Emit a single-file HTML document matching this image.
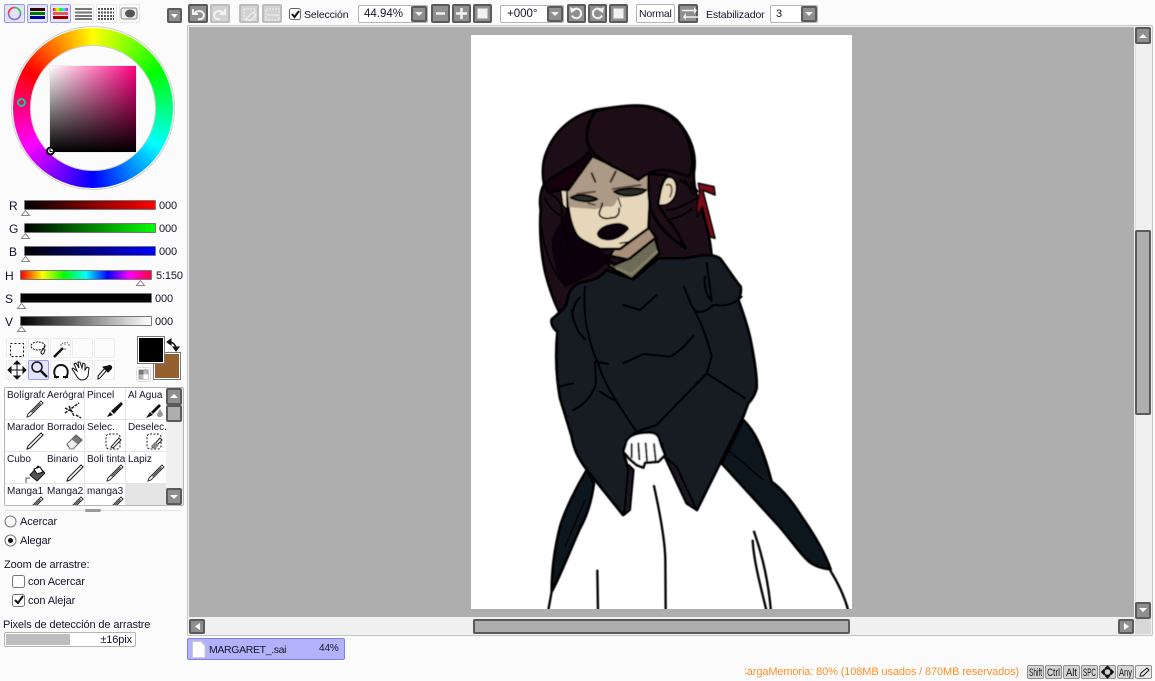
<!DOCTYPE html>
<html><head><meta charset="utf-8"><title>SAI</title>
<style>
html,body{margin:0;padding:0;width:1155px;height:681px;overflow:hidden;background:#fbfbfb}
body{position:relative;font:11px "Liberation Sans",sans-serif;color:#14142a}
.a,.t,.b,.bl,.c,.sl,.tb,.k{position:absolute}
.t{white-space:nowrap;line-height:15px;letter-spacing:-.12px}
.b{box-sizing:border-box;width:19px;height:19px;background:#8f8f8f;border:2px solid #5a5a5a;border-radius:2px}
.bl{box-sizing:border-box;width:20px;height:19px;background:#d2d2d2;border:2px solid #bdbdbd;border-radius:2px}
.c{box-sizing:border-box;height:18px;background:#fff;border:1px solid #b4b4b4;border-radius:2px;padding-left:9px;line-height:16px;font-size:11px}
.sl{box-sizing:border-box;width:132px;height:10px;border:1px solid #777;border-radius:1px}
.tb{box-sizing:border-box;width:21px;height:20px;background:#fbfbfb;border:1px solid #ededed;border-radius:2px}
.k{box-sizing:border-box;top:665px;width:17px;height:14px;background:#d4d4d4;border:1px solid #8f8f8f;border-radius:2px}
.k svg{position:absolute;left:0;top:0}
.k text{font:11px "Liberation Sans",sans-serif;fill:#111}
.cell{position:absolute;width:40px;height:31px;background:#fff;overflow:hidden}
.cell span{position:absolute;left:2px;top:2px;font-size:10px;line-height:12px;white-space:nowrap}
.cell svg{position:absolute;left:0;top:0}
</style></head><body>

<svg width="0" height="0" style="position:absolute"><defs>
<g id="pen"><path d="M23 26L36 13l2 2L25 28l-3 1z" fill="#fff" stroke="#333" stroke-width="1"/><path d="M26 24l9-9 1 1-9 9z" fill="#555"/></g>
<g id="pen2"><path d="M23 26L36 13l2 2L25 28l-3 1z" fill="#fff" stroke="#222" stroke-width="1.100"/></g>
<g id="brush"><path d="M22 29l3-5 3 3z" fill="#111"/><path d="M26 23l10-9 2 2-9 10z" fill="#111"/></g>
<g id="sel"><rect x="21" y="14" width="14" height="15" rx="3" fill="none" stroke="#222" stroke-dasharray="2 1.500"/><path d="M26 27l8-9 2 2-8 8z" fill="#fff" stroke="#222"/></g>
</defs></svg>

<!-- top-left mode buttons -->
<div class="a" style="left:4px;top:4px;width:21px;height:19px;box-sizing:border-box;background:#e2e4fb;border:1px solid #9a9af5;border-radius:2px"></div>
<div class="a" style="left:27px;top:4px;width:21px;height:19px;box-sizing:border-box;background:#e2e4fb;border:1px solid #9a9af5;border-radius:2px"></div>
<div class="a" style="left:50px;top:4px;width:21px;height:19px;box-sizing:border-box;background:#e2e4fb;border:1px solid #9a9af5;border-radius:2px"></div>
<div class="a" style="left:73px;top:4px;width:21px;height:19px;box-sizing:border-box;border:1px solid #e8e8e8;border-radius:2px"></div>
<div class="a" style="left:96px;top:4px;width:21px;height:19px;box-sizing:border-box;border:1px solid #e8e8e8;border-radius:2px"></div>
<div class="a" style="left:119px;top:4px;width:21px;height:19px;box-sizing:border-box;border:1px solid #e8e8e8;border-radius:2px"></div>
<svg class="a" style="left:0;top:0" width="145" height="26">
<circle cx="14.500" cy="13.500" r="6" fill="none" stroke="#8a6fd0" stroke-width="1.600"/>
<path d="M14.500 7.500a6 6 0 0 1 6 6" fill="none" stroke="#3ecf3e" stroke-width="1.600"/><path d="M8.500 13.500a6 6 0 0 1 6-6" fill="none" stroke="#ff3b2e" stroke-width="1.600"/>
<rect x="30" y="8" width="15" height="3" fill="#300"/><rect x="30" y="12" width="15" height="3" fill="#070"/><rect x="30" y="16" width="15" height="3" fill="#009"/>
<linearGradient id="hg"><stop offset="0" stop-color="#f00"/><stop offset=".3" stop-color="#ff0"/><stop offset=".5" stop-color="#0f0"/><stop offset=".7" stop-color="#0ff"/><stop offset="1" stop-color="#f0f"/></linearGradient>
<rect x="53" y="8" width="15" height="3" fill="url(#hg)"/><rect x="53" y="12" width="15" height="3" fill="#e55"/><rect x="53" y="16" width="15" height="3" fill="#900"/>
<path d="M75 9h17M75 12.500h17M75 16h17M75 19h17" stroke="#777" stroke-width="2"/>
<path d="M98 9h16M98 12.500h16M98 16h16M98 19h16" stroke="#555" stroke-width="2" stroke-dasharray="2 1"/>
<rect x="121" y="8" width="16" height="11" rx="2" fill="#eee" stroke="#888"/><ellipse cx="130" cy="13.500" rx="5" ry="4" fill="#555"/>
</svg>
<div class="b" style="left:167px;top:8px;width:15px;height:15px"></div>
<svg class="a" style="left:167px;top:8px" width="15" height="15"><path d="M4 6h7l-3.500 4z" fill="#fff"/></svg>

<!-- colour wheel -->
<div class="a" style="left:11px;top:26px;width:164px;height:164px;border-radius:50%;box-sizing:border-box;border:1px solid #cfcfcf;background:#fbfbfb"></div>
<div class="a" style="left:13px;top:28px;width:160px;height:160px;border-radius:50%;background:conic-gradient(#ff0,#0f0,#0ff,#00f,#f0f,#f00,#ff0)"></div>
<div class="a" style="left:30px;top:45px;width:126px;height:126px;box-sizing:border-box;border-radius:50%;background:#fbfbfb;border:1px solid #cfcfcf"></div>
<div class="a" style="left:49px;top:65px;width:88px;height:88px;box-sizing:border-box;border:1px solid #eee;background:linear-gradient(to top,#000,rgba(0,0,0,0)),linear-gradient(to right,#fff,#ff0080)"></div>
<svg class="a" style="left:0;top:0" width="185" height="190">
<circle cx="21.500" cy="102.500" r="3.500" fill="none" stroke="#17c79a" stroke-width="2"/>
<circle cx="50.500" cy="151" r="3.500" fill="#fff" stroke="#000" stroke-width="2"/><path d="M50 149v2.500h2.500" stroke="#000" fill="none"/>
</svg>

<!-- sliders -->
<div class="t" style="left:9px;top:199px;font-size:12px">R</div>
<div class="t" style="left:9px;top:222px;font-size:12px">G</div>
<div class="t" style="left:9px;top:245px;font-size:12px">B</div>
<div class="t" style="left:5px;top:269px;font-size:12px">H</div>
<div class="t" style="left:5px;top:292px;font-size:12px">S</div>
<div class="t" style="left:5px;top:315px;font-size:12px">V</div>
<div class="sl" style="left:24px;top:200px;background:linear-gradient(to right,#000,#f00)"></div>
<div class="sl" style="left:24px;top:223px;background:linear-gradient(to right,#000,#0f0)"></div>
<div class="sl" style="left:24px;top:246px;background:linear-gradient(to right,#000,#00f)"></div>
<div class="sl" style="left:20px;top:270px;background:linear-gradient(to right,#f00,#ff0,#0f0,#0ff,#00f,#f0f,#f04)"></div>
<div class="sl" style="left:20px;top:293px;background:#000"></div>
<div class="sl" style="left:20px;top:316px;background:linear-gradient(to right,#000,#fff)"></div>
<svg class="a" style="left:0;top:205px" width="160" height="130" fill="#fff" stroke="#888">
<path d="M25.500 5.500l4 5h-8zM25.500 28.500l4 5h-8zM25.500 51.500l4 5h-8zM140.500 75.500l4 5h-8zM21.500 98.500l4 5h-8zM21.500 121.500l4 5h-8z"/>
</svg>
<div class="t" style="left:159px;top:199px">000</div>
<div class="t" style="left:159px;top:222px">000</div>
<div class="t" style="left:159px;top:245px">000</div>
<div class="t" style="left:156px;top:269px">5:150</div>
<div class="t" style="left:155px;top:292px">000</div>
<div class="t" style="left:155px;top:315px">000</div>

<!-- tools -->
<div class="tb" style="left:6px;top:338px"></div><div class="tb" style="left:28px;top:338px"></div><div class="tb" style="left:50px;top:338px"></div><div class="tb" style="left:72px;top:338px"></div><div class="tb" style="left:94px;top:338px"></div>
<div class="tb" style="left:6px;top:360px"></div><div class="tb" style="left:28px;top:360px;background:#e2e4fb;border-color:#9a9af5"></div><div class="tb" style="left:50px;top:360px"></div><div class="tb" style="left:72px;top:360px"></div><div class="tb" style="left:94px;top:360px"></div>
<svg class="a" style="left:0;top:336px" width="185" height="48" fill="none" stroke="#111">
<rect x="10.500" y="7.500" width="13" height="13" stroke-dasharray="2 2"/>
<ellipse cx="38" cy="10" rx="7" ry="4" stroke-dasharray="2 1"/><path d="M44 10c2 4-6 5-2 8 1 1 3-2 3-5"/>
<path d="M54 21l9-9" stroke-width="2.500"/><path d="M65 6v3M65 12v2M60 9h2M68 9h2M62 7l1 1M68 6l-1 1" stroke="#777"/>
<path d="M17 25v18M8 34h18M17 25l-3 3h6zM17 43l-3-3h6zM8 34l3-3v6zM26 34l-3-3v6z" fill="#111"/>
<circle cx="37" cy="31" r="5" stroke-width="1.500"/><path d="M41 35l6 6" stroke-width="2.500"/>
<path d="M57 42c-5-4-3-13 4-13s9 9 4 13M54 41h5M63 41h5" stroke-width="2"/>
<path d="M82 44c-3 0-5-3-6-5l-4-6 1-1 4 3-3-7 2-1 3 5-1-6 2 0 2 6 1-5 2 1 0 6 2-3 2 1-1 8c-1 2-3 4-6 4z" fill="#fff" stroke-width="1"/>
<path d="M98 43l2-1 7-8-2-2-7 8z" fill="#fff"/><path d="M103 31l5 5 3-3c2-2-1-5-3-3z" fill="#111"/>
</svg>
<div class="a" style="left:137px;top:336px;width:28px;height:28px;box-sizing:border-box;border:1px solid #777;background:#000;box-shadow:inset 0 0 0 1px #fff;z-index:2"></div>
<div class="a" style="left:153px;top:352px;width:28px;height:28px;box-sizing:border-box;border:1px solid #777;background:#956030;box-shadow:inset 0 0 0 1px #fff"></div>
<svg class="a" style="left:135px;top:336px;z-index:3" width="46" height="46" fill="none" stroke="#111"><path d="M34 6c4 0 7 3 7 7" stroke-width="1.500"/><path d="M36 3l-4 3 4 3zM38 11l3 4 3-4z" fill="#111"/>
<rect x="1.500" y="31.500" width="14" height="14" rx="2" stroke="#ddd" fill="#fbfbfb"/><rect x="4" y="34" width="9" height="9" fill="#bbb" stroke="#999"/><rect x="4" y="34" width="4.500" height="4.500" fill="#777" stroke="none"/><rect x="8.500" y="38.500" width="4.500" height="4.500" fill="#fff" stroke="none"/></svg>

<!-- brush list -->
<div class="a" style="left:4px;top:387px;width:180px;height:119px;box-sizing:border-box;border:1px solid #b5b5b5;background:#eee;border-radius:2px"></div>
<div class="a" style="left:5px;top:388px;width:161px;height:117px;background:#e4e4e4;overflow:hidden">
<div class="cell" style="left:0;top:0"><span>Bolígrafo</span><svg width="40" height="31"><use href="#pen"/></svg></div>
<div class="cell" style="left:40px;top:0;width:39px"><span>Aerógrafo</span><svg width="40" height="31"><path d="M20 25l14-10M24 18l5 10M20 20l8 4M31 27l5 3" stroke="#222" stroke-width="1.500" stroke-dasharray="3 1" fill="none"/></svg></div>
<div class="cell" style="left:80px;top:0"><span>Pincel</span><svg width="40" height="31"><use href="#brush"/></svg></div>
<div class="cell" style="left:121px;top:0"><span>Al Agua</span><svg width="40" height="31"><path d="M20 30l4-6 3 3z" fill="#111"/><path d="M25 24l8-8 2 2-8 8z" fill="#111"/><path d="M34 21l-3 5c-1 4 6 4 6 0z" fill="#999"/></svg></div>
<div class="cell" style="left:0;top:32px"><span>Marador</span><svg width="40" height="31"><use href="#pen2"/></svg></div>
<div class="cell" style="left:40px;top:32px;width:39px"><span>Borrador</span><svg width="40" height="31"><path d="M23 23l8-8 6 5-8 8h-4l-3-3z" fill="#777" stroke="#555"/><path d="M22 24l5-5 6 5-5 5h-3z" fill="#eee" stroke="#777"/></svg></div>
<div class="cell" style="left:80px;top:32px"><span>Selec.</span><svg width="40" height="31"><use href="#sel"/></svg></div>
<div class="cell" style="left:121px;top:32px"><span>Deselec.</span><svg width="40" height="31"><use href="#sel"/><path d="M25 26l4-4 4 3-4 4z" fill="#888"/></svg></div>
<div class="cell" style="left:0;top:64px"><span>Cubo</span><svg width="40" height="31"><path d="M25 23l8-9 7 7-8 8z" fill="#555" stroke="#111"/><path d="M21 31v-5h4" fill="none" stroke="#555"/><path d="M29 17l6-2 3 5-6 2z" fill="#fff" stroke="#111"/></svg></div>
<div class="cell" style="left:40px;top:64px;width:39px"><span>Binario</span><svg width="40" height="31"><use href="#pen2"/></svg></div>
<div class="cell" style="left:80px;top:64px"><span>Boli tinta</span><svg width="40" height="31"><use href="#pen"/></svg></div>
<div class="cell" style="left:121px;top:64px"><span>Lapiz</span><svg width="40" height="31"><use href="#pen"/></svg></div>
<div class="cell" style="left:0;top:96px"><span>Manga1</span><svg width="40" height="31"><use href="#pen"/></svg></div>
<div class="cell" style="left:40px;top:96px;width:39px"><span>Manga2</span><svg width="40" height="31"><use href="#pen"/></svg></div>
<div class="cell" style="left:80px;top:96px"><span>manga3</span><svg width="40" height="31"><use href="#pen"/></svg></div>
</div>
<div class="a" style="left:166px;top:388px;width:16px;height:117px;background:#f0f0f0"></div>
<div class="b" style="left:166px;top:388px;width:16px;height:17px"></div>
<div class="a" style="left:166px;top:405px;width:16px;height:17px;box-sizing:border-box;background:#aeaeae;border:2px solid #5a5a5a;border-radius:2px"></div>
<div class="b" style="left:166px;top:488px;width:16px;height:17px"></div>
<svg class="a" style="left:166px;top:388px" width="16" height="117"><path d="M4 10l4-4 4 4z" fill="#fff"/><path d="M4 107l4 4 4-4z" fill="#fff"/></svg>
<div class="a" style="left:5px;top:510px;width:176px;height:1px;background:#e2e2e2"></div>
<div class="a" style="left:85px;top:509px;width:16px;height:3px;background:#9a9a9a;border-radius:2px"></div>

<!-- zoom options -->
<svg class="a" style="left:0;top:512px" width="185" height="100">
<circle cx="10.500" cy="9.500" r="5.500" fill="#fff" stroke="#777"/>
<circle cx="10.500" cy="28.500" r="5.500" fill="#fff" stroke="#777"/><circle cx="10.500" cy="28.500" r="2.500" fill="#111"/>
<rect x="12.500" y="63.500" width="12" height="12" rx="2" fill="#fff" stroke="#777"/>
<rect x="12.500" y="82.500" width="12" height="12" rx="2" fill="#fff" stroke="#777"/><path d="M15 88l3 3 5-7" fill="none" stroke="#111" stroke-width="2"/>
</svg>
<div class="t" style="left:20px;top:515px">Acercar</div>
<div class="t" style="left:20px;top:534px">Alegar</div>
<div class="t" style="left:4px;top:558px">Zoom de arrastre:</div>
<div class="t" style="left:28px;top:575px">con Acercar</div>
<div class="t" style="left:28px;top:594px">con Alejar</div>
<div class="t" style="left:3px;top:618px">Pixels de detección de arrastre</div>
<div class="a" style="left:4px;top:632px;width:132px;height:15px;box-sizing:border-box;border:1px solid #b4b4b4;background:#fff;border-radius:2px"><div class="a" style="left:1px;top:1px;width:64px;height:11px;background:#bdbdbd"></div><div class="t" style="right:3px;top:0">±16pix</div></div>

<!-- top toolbar -->
<div class="b" style="left:188px;top:4px;width:20px"></div>
<div class="bl" style="left:210px;top:4px"></div>
<div class="bl" style="left:239px;top:4px"></div>
<div class="bl" style="left:262px;top:4px"></div>
<svg class="a" style="left:186px;top:2px" width="100" height="24" fill="none" stroke="#f2f2f2" stroke-width="2">
<path d="M7 7v5h5M8 12c2-4 9-4 10 1 0 3-3 5-6 4"/><path d="M39 7v5h-5M38 12c-2-4-9-4-10 1 0 3 3 5 6 4"/>
<rect x="58" y="7" width="11" height="11" stroke-width="1" stroke-dasharray="2 1"/><path d="M60 17l7-7 3 3-6 6z" stroke-width="1"/>
<rect x="80" y="7" width="13" height="11" stroke-width="1" stroke-dasharray="2 1"/><path d="M81 13h11" stroke-width="1"/>
</svg>
<svg class="a" style="left:288px;top:7px" width="15" height="15"><rect x="1.500" y="1.500" width="11" height="11" rx="2" fill="#fff" stroke="#666"/><path d="M4 7l2.500 3L11 4" fill="none" stroke="#111" stroke-width="2"/></svg>
<div class="t" style="left:304px;top:8px;font-size:10.500px">Selección</div>
<div class="c" style="left:358px;top:5px;width:70px;font-size:11.500px;padding-left:5px">44.94%</div>
<div class="b" style="left:411px;top:6px;width:16px;height:16px"></div>
<div class="b" style="left:431px;top:4px"></div><div class="b" style="left:452px;top:4px"></div><div class="b" style="left:473px;top:4px"></div>
<div class="c" style="left:500px;top:5px;width:64px;font-size:11.500px;padding-left:6px">+000°</div>
<div class="b" style="left:547px;top:6px;width:16px;height:16px"></div>
<div class="b" style="left:567px;top:4px"></div><div class="b" style="left:588px;top:4px"></div><div class="b" style="left:609px;top:4px"></div>
<div class="c" style="left:636px;top:4px;width:39px;height:19px;padding-left:2px;font-size:10.500px;line-height:18px;letter-spacing:-.2px">Normal</div>
<div class="b" style="left:678px;top:4px;width:20px"></div>
<div class="t" style="left:706px;top:8px;font-size:10.500px">Estabilizador</div>
<div class="c" style="left:770px;top:5px;width:48px;padding-left:5px">3</div>
<div class="b" style="left:801px;top:6px;width:16px;height:16px"></div>
<svg class="a" style="left:0;top:0" width="825" height="26" fill="none" stroke="#f2f2f2" stroke-width="2.500">
<path d="M415 12h8l-4 4z M551 12h8l-4 4z M805 12h8l-4 4z" fill="#f2f2f2" stroke="none"/>
<path d="M436 13.500h9M456 13.500h11M461.500 8v11"/><rect x="477.500" y="8.500" width="10" height="10" fill="#f2f2f2" stroke="none"/>
<path d="M572.500 10.500a4.800 4.800 0 1 1-.5 5" stroke-width="2"/><path d="M570 7l1 6 5-3z" fill="#f2f2f2" stroke="none"/>
<path d="M601.500 10.500a4.800 4.800 0 1 0 .5 5" stroke-width="2"/><path d="M604 7l-1 6-5-3z" fill="#f2f2f2" stroke="none"/>
<rect x="613.500" y="8.500" width="10" height="10" fill="#f2f2f2" stroke="none"/>
<path d="M682 10.500h12M686 17h12" stroke-width="1.500"/><path d="M694 7l3 3.500-3 3.500zM686 13l-3 4 3 3z" fill="#f2f2f2" stroke="none"/>
</svg>

<!-- canvas frame -->
<div class="a" style="left:187px;top:25px;width:966px;height:611px;box-sizing:border-box;border:1px solid #c4c4c4;border-radius:2px;background:#f0f0f0"></div>
<div class="a" style="left:189px;top:27px;width:945px;height:590px;background:#aeaeae"></div>
<div class="a" style="left:471px;top:35px;width:381px;height:574px;background:#fff"></div>

<!-- drawing -->
<svg class="a" style="left:0;top:0" width="1155" height="681" stroke-linejoin="round" stroke-linecap="round">
<defs><clipPath id="cv"><rect x="471" y="35" width="381" height="574"/></clipPath>
<filter id="sf"><feGaussianBlur stdDeviation=".45"/></filter></defs>
<g clip-path="url(#cv)" filter="url(#sf)">

<!-- head & hair, zoom-7 coordinates -->
<g transform="translate(520 95) scale(.33333)" stroke="#000" stroke-width="8">
<path d="M225 45C160 60 105 105 80 170C65 205 68 245 72 268C60 290 58 320 62 345C58 400 62 470 75 530C85 570 100 620 125 665L300 520L560 490L575 480C570 430 560 380 530 300C525 280 520 260 522 230C530 180 515 125 470 75C430 40 380 28 330 32C290 35 255 40 225 45Z" fill="#1c0d19"/>
<path d="M140 345L240 462L275 490L230 530L135 578C110 540 95 480 95 430Z" fill="#0c0208" stroke="none"/>
<path d="M72 265C110 225 170 215 205 175L215 185L145 285L125 285L85 292Z" fill="#150409" stroke="none"/>
<!-- ribbon -->
<path d="M535 265L582 275L585 300L548 285L585 430L570 425L547 335L532 365L530 330L540 290Z" fill="#7a0c18" stroke-width="5"/>
<!-- neck -->
<path d="M290 450L385 395L410 432L330 495L270 482Z" fill="#a98e79"/>
<!-- face -->
<path d="M215 185L300 225L355 255L385 235L390 300L385 400L330 440L300 462L240 462C205 445 180 435 170 420C155 395 145 365 140 285Z" fill="#e6d6ba"/>
<path d="M143 290L215 187L300 227L355 257L385 237L388 285C360 300 330 310 300 308C285 315 290 335 270 335C250 330 240 345 215 342L147 336Z" fill="#ad9a86" stroke="none"/>
<path d="M122 285L140 282L142 345L128 330Z" fill="#e6d6ba" stroke-width="5"/>
<!-- brows / eye marks -->
<path d="M215 235L226 260M287 230L272 260" fill="none" stroke="#2a1e1e" stroke-width="6"/>
<path d="M170 297L225 290M278 282L362 270" fill="none" stroke="#5a483c" stroke-width="6"/>
<path d="M152 308C170 296 205 298 232 312C215 322 180 322 152 308Z" fill="#2c2e28" stroke-width="6"/>
<path d="M282 290C310 278 350 278 378 285C360 305 310 308 282 290Z" fill="#2c2e28" stroke-width="6"/>
<path d="M295 310L303 335M205 325L225 330" fill="none" stroke="#2a2520" stroke-width="4"/>
<!-- nose -->
<path d="M247 325C245 340 236 348 238 358C242 372 262 372 275 368C290 370 300 355 297 340" fill="none" stroke-width="5"/>
<!-- lips -->
<path d="M232 415C240 395 265 387 295 385C315 388 325 395 325 402C310 420 290 435 262 435C245 433 232 428 232 415Z" fill="#0c0408" stroke-width="3"/>
<path d="M300 445L330 440" fill="none" stroke-width="4"/>
<!-- fringe lines over face -->
<path d="M225 50C205 80 200 110 200 135C205 165 235 195 300 225L355 255C375 240 385 232 420 225C450 225 480 235 505 245C525 220 520 150 480 90C440 45 390 32 330 32C280 36 245 42 225 50Z" fill="#1c0d19"/>
<path d="M72 268C110 230 170 215 205 172L216 186L145 285L122 284L85 292Z" fill="#170610"/>
<!-- right hair panel -->
<path d="M386 236C385 280 385 320 395 350C410 385 440 420 470 440L497 460C480 430 470 400 440 370C425 345 415 335 415 325L425 270L440 240Z" fill="#1c0d19"/>
<!-- ear -->
<path d="M415 330C420 300 422 270 440 248C462 240 475 265 468 295C462 320 440 335 415 330Z" fill="#e6d6ba" stroke-width="6"/>
<path d="M440 270C455 262 460 285 450 305" fill="none" stroke="#75604f" stroke-width="6"/>
<!-- bun lines -->
<path d="M440 345C470 345 505 325 530 310M440 375C470 370 495 360 515 342M480 255L525 285M495 255L520 300M510 262L535 290" fill="none" stroke-width="5"/>
<!-- left locks -->
<path d="M75 310C85 335 105 355 125 362M90 295C125 315 128 340 125 365C130 420 150 470 170 510M65 400C75 470 95 530 135 570" fill="none" stroke-width="5"/>
<!-- collar -->
<path d="M255 490L282 510L330 490L405 430L418 475L335 553L270 515Z" fill="#6d6a54"/>
<path d="M290 520L335 538L410 470" fill="none" stroke="#85826a" stroke-width="7"/>
</g>

<!-- back skirt panels, zoom-9 coordinates -->
<g transform="translate(530 420) scale(.33333)" stroke="#000" stroke-width="8">
<path d="M170 150L192 190C185 240 170 290 150 325C125 380 90 470 65 515C65 450 75 380 90 320C105 270 140 200 170 150Z" fill="#10181f"/>
<path d="M640 0C670 30 695 70 725 185C760 210 790 250 815 290C850 340 885 400 902 448C880 445 850 440 830 418C800 390 770 340 730 300L575 130Z" fill="#10181f"/>
<path d="M105 380L165 240M600 95L700 180" fill="none" stroke-width="4"/>
</g>

<!-- dress, zoom-8 coordinates -->
<g transform="translate(530 240) scale(.33333)" stroke="#000" stroke-width="8">
<path d="M310 118L385 55L465 55L490 50C530 42 560 45 572 57C600 95 615 120 632 140C635 155 630 170 625 178C640 220 655 265 662 300C672 350 682 405 680 445C675 465 665 480 655 490L640 530L501 810L470 790L405 651L395 610L320 575L295 600L282 640L295 690L300 750L290 815L279 825L171 690C140 650 130 620 125 590L90 475C80 420 75 350 82 275C68 265 62 250 65 238C80 225 105 205 110 190C115 160 120 145 145 130C170 122 200 125 230 90Z" fill="#121a22"/>
<g fill="none" stroke-width="6">
<path d="M280 195L330 210L380 165"/>
<path d="M280 370L340 342L420 350C450 335 470 310 490 288"/>
<path d="M200 365L235 372"/>
<path d="M125 210C125 225 130 240 145 275L165 298M150 172C135 185 125 210 130 235M165 140C160 180 165 250 175 280C180 310 190 340 205 370C215 410 240 460 320 575"/>
<path d="M85 440L130 430M130 510C160 495 185 470 198 432L195 365M210 455L250 480"/>
<path d="M462 140C470 160 480 190 490 205C500 220 520 222 550 195C570 195 600 205 635 170"/>
<path d="M530 70L545 180M525 110C520 135 530 170 545 182"/>
<path d="M490 205C510 240 530 290 545 350L530 400"/>
<path d="M530 400L645 475M530 400L380 555L320 575"/>
</g>
</g>

<!-- sleeve tips and hand, zoom-9 coordinates -->
<g transform="translate(530 420) scale(.33333)" stroke="#000" stroke-width="6">
<path d="M296 135L282 285L300 270L311 150Z" fill="#1b1420"/>
<path d="M405 110L470 250L500 270L440 140Z" fill="#1b1420" />
<path d="M290 62C300 45 325 38 350 38C375 36 385 45 388 58L395 80L405 105L385 125L345 128L340 143L320 135L300 118L280 95Z" fill="#fff" stroke-width="8"/>
<path d="M305 72L305 112M325 70L328 118M347 70L351 122M372 72L377 120" fill="none" stroke-width="6"/>
<!-- skirt lines -->
<path d="M65 515L55 570M900 450C925 490 945 535 955 572M372 198C390 280 405 360 406 420L407 575M202 452L204 575M672 335C695 400 715 480 723 575M668 362C672 430 695 510 710 575" fill="none" stroke-width="7"/>
</g>
</g>
</svg>

<!-- scrollbars -->
<div class="a" style="left:1135px;top:27px;width:16px;height:591px;background:#f0f0f0;border-left:1px solid #e0e0e0;box-sizing:border-box"></div>
<div class="b" style="left:1135px;top:27px;width:16px;height:17px"></div>
<div class="a" style="left:1135px;top:230px;width:16px;height:185px;box-sizing:border-box;background:#aeaeae;border:2px solid #5a5a5a;border-radius:2px"></div>
<div class="b" style="left:1135px;top:602px;width:16px;height:17px"></div>
<div class="a" style="left:189px;top:619px;width:945px;height:15px;background:#f0f0f0"></div>
<div class="b" style="left:189px;top:619px;width:16px;height:15px"></div>
<div class="a" style="left:473px;top:619px;width:377px;height:15px;box-sizing:border-box;background:#aeaeae;border:2px solid #5a5a5a;border-radius:2px"></div>
<div class="b" style="left:1118px;top:619px;width:16px;height:15px"></div>
<div class="a" style="left:1135px;top:619px;width:16px;height:15px;background:#d8d8d8"></div>
<svg class="a" style="left:0;top:0" width="1155" height="640" fill="#fff"><path d="M1139 38l4-4 4 4zM1139 608l4 4 4-4zM200 623l-5 3.500 5 3.500zM1124 623l5 3.500-5 3.500z"/></svg>

<!-- tab -->
<div class="a" style="left:187px;top:638px;width:158px;height:22px;box-sizing:border-box;background:#b2b2fb;border:1px solid #8282ef;border-radius:2px"></div>
<svg class="a" style="left:192px;top:641px" width="14" height="17"><path d="M.5.500H9L13 5v11.500H.5z" fill="#fff" stroke="#ccc"/></svg>
<div class="t" style="left:209px;top:643px;font-size:10.500px;letter-spacing:-.35px">MARGARET_.sai</div>
<div class="t" style="left:319px;top:641px;font-size:10px">44%</div>

<!-- status -->
<div class="a" style="left:745px;top:665px;width:274px;height:15px;overflow:hidden"><div class="t" style="right:0;top:0;color:#ff8f26;font-size:11px">CargaMemoria: 80% (108MB usados / 870MB reservados)</div></div>
<div class="k" style="left:1027px"><svg width="15" height="12"><text x="1" y="10" textLength="13" lengthAdjust="spacingAndGlyphs">Shift</text></svg></div>
<div class="k" style="left:1045px"><svg width="15" height="12"><text x="1" y="10" textLength="13" lengthAdjust="spacingAndGlyphs">Ctrl</text></svg></div>
<div class="k" style="left:1063px"><svg width="15" height="12"><text x="2" y="10" textLength="11" lengthAdjust="spacingAndGlyphs">Alt</text></svg></div>
<div class="k" style="left:1081px"><svg width="15" height="12"><text x="1" y="10" textLength="13" lengthAdjust="spacingAndGlyphs">SPC</text></svg></div>
<div class="k" style="left:1099px"></div>
<div class="k" style="left:1117px"><svg width="15" height="12"><text x="1" y="10" textLength="13" lengthAdjust="spacingAndGlyphs">Any</text></svg></div>
<div class="k" style="left:1135px;background:#e8e8e8"></div>
<svg class="a" style="left:1099px;top:665px" width="54" height="14" fill="none" stroke="#111"><circle cx="8.500" cy="7" r="3.500" stroke-width="1.500"/><path d="M8.500 1l-2 2h4zM8.500 13l-2-2h4zM2.500 7l2-2v4zM14.500 7l-2-2v4z" fill="#111"/><path d="M41 11l1-3 6-5 2 2-6 6z"/></svg>
</body></html>
